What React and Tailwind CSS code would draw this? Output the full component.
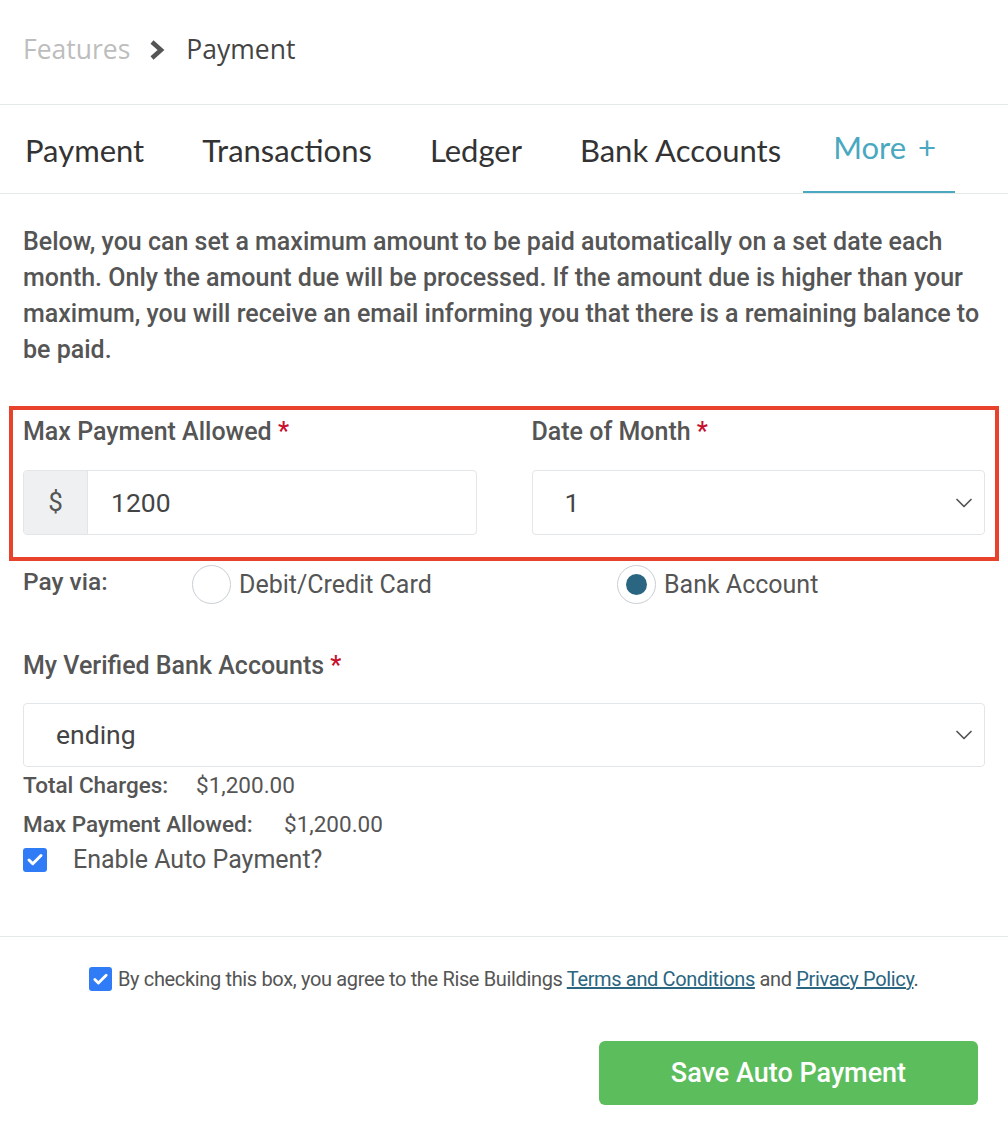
import { ChevronDown, Check } from 'lucide-react';

const tabs = ['Payment', 'Transactions', 'Ledger', 'Bank Accounts'];

function Label({ children }) {
  return (
    <p className="text-[25px] leading-[30px] font-medium text-[#555]">
      {children} <span className="text-[#c8102e]">*</span>
    </p>
  );
}

function Radio({ checked, label }) {
  return (
    <div className="flex items-center gap-2">
      <span className="w-[39px] h-[39px] rounded-full border border-[#c8cfd4] flex items-center justify-center bg-white">
        {checked && <span className="w-[21px] h-[21px] rounded-full bg-[#2a6581]" />}
      </span>
      <span className="text-[25px] text-[#555]">{label}</span>
    </div>
  );
}

export default function App() {
  return (
    <div className="w-[1008px] min-h-[1130px] bg-white" style={{ fontFamily: 'Roboto, sans-serif' }}>
      <div className="h-[105px] flex items-center px-[23px] pb-[4px] border-b border-[#e6e9ea]" style={{ fontFamily: '"Open Sans", sans-serif' }}>
        <span className="text-[26.5px] text-[#bdbdbd]">Features</span>
        <svg width="16" height="20" viewBox="0 0 16 20" className="ml-[19px] mr-[21px]">
          <path d="M3 2 L12 10 L3 18" fill="none" stroke="#555" strokeWidth="4.5" strokeLinejoin="miter" />
        </svg>
        <span className="text-[26.5px] text-[#444]">Payment</span>
      </div>

      <div className="h-[89px] flex items-stretch border-b border-[#e6e9ea] pl-[25px] pt-[2px]" style={{ fontFamily: 'Lato, sans-serif' }}>
        {tabs.map((t, i) => (
          <div key={t} className={`flex items-center text-[31px] text-[#333] ${i < 3 ? 'mr-[58px]' : 'mr-[22px]'}`}>{t}</div>
        ))}
        <div className="flex items-center gap-[12px] pl-[30px] pr-[19px] text-[31px] text-[#4aa8c0] border-b-2 border-[#4aa8c0] pb-[4px]">
          <span>More</span>
          <span>+</span>
        </div>
      </div>

      <div className="px-[23px]">
        <p className="mt-[30px] text-[25px] leading-[36px] font-medium text-[#555]">
          Below, you can set a maximum amount to be paid automatically on a set date each month. Only the amount due will be processed. If the amount due is higher than your maximum, you will receive an email informing you that there is a remaining balance to be paid.
        </p>
      </div>

      <div className="mx-[9px] mt-[38px] border-[4px] border-[#e8412c] h-[155px] flex gap-[55px] px-[10px]">
        <div className="flex-1">
          <div className="mt-[7px]"><Label>Max Payment Allowed</Label></div>
          <div className="mt-[23px] flex h-[65px] border border-[#e2e6e8] rounded-[4px] overflow-hidden">
            <div className="w-[64px] bg-[#eef0f2] border-r border-[#e2e6e8] flex items-center justify-center text-[26px] text-[#555]">$</div>
            <div className="flex-1 flex items-center pl-[23px] text-[26.5px] text-[#444]">1200</div>
          </div>
        </div>
        <div className="flex-1">
          <div className="mt-[7px]"><Label>Date of Month</Label></div>
          <div className="mt-[23px] flex items-center justify-between h-[65px] border border-[#e2e6e8] rounded-[4px] pl-[32px] pr-[6px]">
            <span className="text-[26.5px] text-[#444]">1</span>
            <ChevronDown className="w-7 h-7 text-[#555]" strokeWidth={1.5} />
          </div>
        </div>
      </div>

      <div className="px-[23px]">
        <div className="flex items-center h-[39px] mt-[4px]">
          <span className="w-[169px] text-[24.5px] font-medium text-[#555] -mt-[4px]">Pay via:</span>
          <div className="w-[425px]"><Radio label="Debit/Credit Card" /></div>
          <Radio checked label="Bank Account" />
        </div>

        <div className="mt-[47px]"><Label>My Verified Bank Accounts</Label></div>
        <div className="mt-[22px] flex items-center justify-between h-[64px] border border-[#e2e6e8] rounded-[4px] pl-[32px] pr-[6px]">
          <span className="text-[26.5px] text-[#444]">ending</span>
          <ChevronDown className="w-7 h-7 text-[#555]" strokeWidth={1.5} />
        </div>

        <div className="mt-[4px] flex text-[22.5px] text-[#555] leading-[28px]">
          <span className="font-medium w-[173px]">Total Charges:</span>
          <span>$1,200.00</span>
        </div>
        <div className="mt-[11px] flex text-[22.5px] text-[#555] leading-[28px]">
          <span className="font-medium w-[261px]">Max Payment Allowed:</span>
          <span>$1,200.00</span>
        </div>
        <div className="mt-[7px] h-[30px] flex items-center gap-[26px]">
          <span className="w-[24px] h-[24px] rounded-[3px] bg-[#2f7cf6] flex items-center justify-center">
            <Check className="w-[18px] h-[18px] text-white" strokeWidth={4} />
          </span>
          <span className="text-[25px] text-[#555]">Enable Auto Payment?</span>
        </div>
      </div>

      <div className="mt-[61px] border-t border-[#e6e9ea]" />

      <div className="mt-[30px] h-[24px] flex items-center pl-[89px] gap-[6px] text-[20px] text-[#555] tracking-[-0.35px]">
        <span className="w-[23px] h-[24px] rounded-[3px] bg-[#2f7cf6] flex items-center justify-center shrink-0">
          <Check className="w-[17px] h-[17px] text-white" strokeWidth={4} />
        </span>
        <span className="whitespace-nowrap">
          By checking this box, you agree to the Rise Buildings{' '}
          <a className="underline text-[#2a6581]">Terms and Conditions</a> and{' '}
          <a className="underline text-[#2a6581]">Privacy Policy</a>.
        </span>
      </div>

      <div className="mt-[50px] flex justify-end pr-[30px]">
        <button className="w-[379px] h-[64px] rounded-[6px] bg-[#5cbd5c] text-white text-[27px] font-medium">
          Save Auto Payment
        </button>
      </div>
    </div>
  );
}
